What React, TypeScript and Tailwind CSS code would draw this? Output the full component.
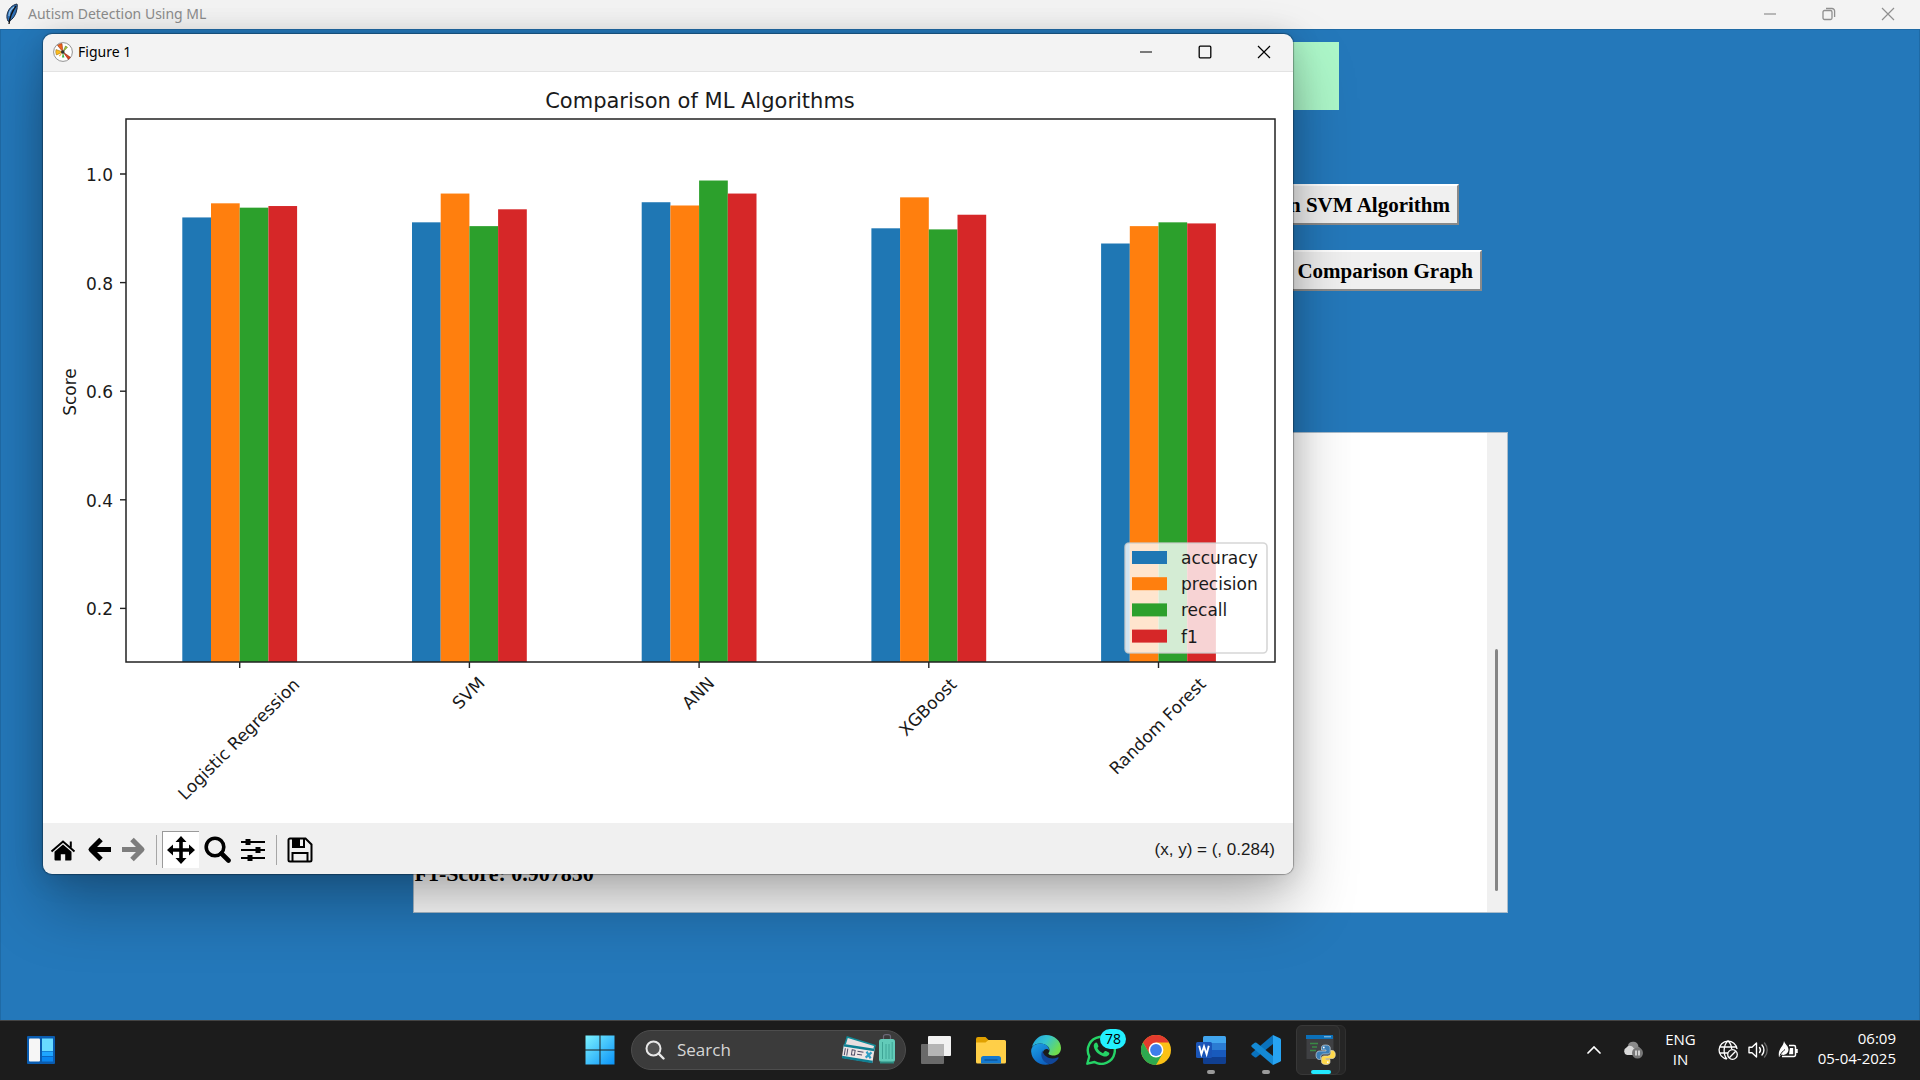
import type { ReactNode } from "react";

type Series = { name: string; color: string };
type Group = { label: string; labelY: number; scores: number[] };

const series: Series[] = [
  { name: "accuracy", color: "#1f77b4" },
  { name: "precision", color: "#ff7f0e" },
  { name: "recall", color: "#2ca02c" },
  { name: "f1", color: "#d62728" },
];

const groups: Group[] = [
  { label: "Logistic Regression", labelY: 667, scores: [0.92, 0.946, 0.938, 0.941] },
  { label: "SVM", labelY: 621, scores: [0.911, 0.964, 0.904, 0.935] },
  { label: "ANN", labelY: 621, scores: [0.948, 0.942, 0.988, 0.964] },
  { label: "XGBoost", labelY: 635, scores: [0.9, 0.957, 0.898, 0.925] },
  { label: "Random Forest", labelY: 654, scores: [0.872, 0.904, 0.911, 0.909] },
];

const yTicks = [1.0, 0.8, 0.6, 0.4, 0.2];

const plot = { left: 83, right: 1232, top: 47, bottom: 590 };
const barWidth = 28.7;
const yOf = (v: number) => 102 + (1 - v) * 543;
const centerOf = (i: number) => 196.7 + i * 229.7;

function ComparisonChart() {
  return (
    <svg
      viewBox="0 0 1250 751"
      className="block w-full bg-white"
      fontFamily="'DejaVu Sans', sans-serif"
      fontSize="17"
      fill="#1a1a1a"
      role="img"
      aria-label="Comparison of ML Algorithms"
    >
      <text x="657" y="36" textAnchor="middle" fontSize="21">
        Comparison of ML Algorithms
      </text>
      {groups.map((g, i) => (
        <g key={g.label}>
          {g.scores.map((score, j) => (
            <rect
              key={series[j].name}
              x={centerOf(i) + (j - 2) * barWidth}
              y={yOf(score)}
              width={barWidth}
              height={plot.bottom - yOf(score)}
              fill={series[j].color}
            />
          ))}
          <path d={`M${centerOf(i)} ${plot.bottom}v6`} stroke="#222" strokeWidth="1.4" />
          <text
            textAnchor="middle"
            dominantBaseline="central"
            transform={`translate(${centerOf(i) - 1} ${g.labelY}) rotate(-45)`}
          >
            {g.label}
          </text>
        </g>
      ))}
      {yTicks.map((t) => (
        <g key={t}>
          <path d={`M${plot.left} ${yOf(t)}h-6`} stroke="#222" strokeWidth="1.4" />
          <text x="70" y={yOf(t) + 7} textAnchor="end">
            {t.toFixed(1)}
          </text>
        </g>
      ))}
      <text textAnchor="middle" transform="translate(33 320) rotate(-90)">
        Score
      </text>
      <rect
        x={plot.left}
        y={plot.top}
        width={plot.right - plot.left}
        height={plot.bottom - plot.top}
        fill="none"
        stroke="#222"
        strokeWidth="1.5"
      />
      <rect x="1082" y="471" width="142" height="110" rx="4" fill="#fff" fillOpacity="0.8" stroke="#ccc" strokeOpacity="0.8" strokeWidth="1.6" />
      {series.map((s, i) => (
        <g key={s.name}>
          <rect x="1089" y={479 + i * 26.2} width="35" height="13" fill={s.color} />
          <text x="1138" y={492 + i * 26.2}>
            {s.name}
          </text>
        </g>
      ))}
    </svg>
  );
}

function WindowControls({ muted, restored }: { muted?: boolean; restored?: boolean }) {
  const item = "flex w-[59px] items-center justify-center";
  return (
    <div className={muted ? "flex self-stretch text-[#8f8f8f]" : "flex self-stretch text-black"}>
      <button className={item} aria-label="Minimize">
        <svg width="14" height="14" viewBox="0 0 14 14" stroke="currentColor" strokeWidth="1.2"><path d="M1 7h12" /></svg>
      </button>
      <button className={item} aria-label={restored ? "Restore" : "Maximize"}>
        <svg width="14" height="14" viewBox="0 0 14 14" fill="none" stroke="currentColor" strokeWidth="1.3">
          {restored ? (
            <>
              <rect x="1" y="3.5" width="9" height="9" rx="1.5" />
              <path d="M4 1.5h6a2.6 2.6 0 0 1 2.6 2.6V10" />
            </>
          ) : (
            <rect x="1.2" y="1.2" width="11.6" height="11.6" rx="1" />
          )}
        </svg>
      </button>
      <button className={item} aria-label="Close">
        <svg width="14" height="14" viewBox="0 0 14 14" stroke="currentColor" strokeWidth="1.2"><path d="M1 1l12 12M13 1L1 13" /></svg>
      </button>
    </div>
  );
}

function FeatherIcon() {
  return (
    <svg width="14" height="22" viewBox="0 0 14 22">
      <path d="M12 1C7 2 3 6 2 12c-.3 2 0 4 1 6l1 .5C8 16 11 12 12 6c.3-2 .4-4 0-5z" fill="#2e6fb5" stroke="#1b2c44" strokeWidth="1" />
      <path d="M11 3C8 7 5 12 4 21" stroke="#111" strokeWidth="1.3" fill="none" />
      <path d="M9 4C6 6 4 9 4 13" stroke="#8fc0ea" strokeWidth="1.2" fill="none" />
    </svg>
  );
}

function MatplotlibIcon() {
  return (
    <svg width="20" height="20" viewBox="0 0 20 20">
      <circle cx="10" cy="10" r="9.4" fill="#fff" stroke="#777" strokeWidth=".8" />
      <path d="M10 10L4.500 3.400A8.500 8.500 0 0 1 9 1.600z" fill="#f0641e" stroke="#7a3010" strokeWidth=".5" />
      <path d="M10 10L3 7.500a8 8 0 0 0 .4 5.500z" fill="#fdbb1c" stroke="#8a6508" strokeWidth=".5" />
      <path d="M10 10l7.400 5.200-2 2.200z" fill="#e2431e" stroke="#70200c" strokeWidth=".5" />
      <path d="M10 10l2.500-6 2 1.200z" fill="#a8cf38" stroke="#4d6613" strokeWidth=".5" />
      <path d="M10 10l-1 5.500 2.400 0z" fill="#3fb24a" />
      <path d="M10 10l-4 3.400.8 1z" fill="#f6a11e" />
      <circle cx="9.800" cy="10" r="1.800" fill="#333" />
    </svg>
  );
}

const toolIcons = {
  home: (
    <svg width="26" height="24" viewBox="0 0 26 24" fill="currentColor">
      <path d="M13 6.500l8.500 7.300v7.700a1 1 0 0 1-1 1h-5.300v-6.300h-4.400v6.300H5.500a1 1 0 0 1-1-1v-7.700z" />
      <path d="M1.500 13.500L13 3.500l11.500 10M20.800 9.500V3.500" fill="none" stroke="currentColor" strokeWidth="2" />
    </svg>
  ),
  back: (
    <svg width="25" height="25" viewBox="0 0 25 25" fill="none" stroke="currentColor" strokeWidth="5">
      <path d="M14 2.500L4 12.500l10 10M4.500 12.500h19.500" strokeLinejoin="round" />
    </svg>
  ),
  forward: (
    <svg width="25" height="25" viewBox="0 0 25 25" fill="none" stroke="currentColor" strokeWidth="5">
      <path d="M11 2.500l10 10-10 10M20.500 12.500H1" strokeLinejoin="round" />
    </svg>
  ),
  pan: (
    <svg width="28" height="28" viewBox="0 0 28 28" fill="currentColor">
      <path d="M14 0l5.500 6h-3.700v6.200H22V8.500l6 5.500-6 5.500v-3.700h-6.200V22h3.700L14 28l-5.500-6h3.700v-6.200H6v3.700L0 14l6-5.500v3.700h6.200V6H8.500z" />
    </svg>
  ),
  zoom: (
    <svg width="27" height="27" viewBox="0 0 27 27" fill="none" stroke="currentColor">
      <circle cx="11" cy="11" r="8.800" strokeWidth="3.600" />
      <path d="M17.500 17.500l7 7" strokeWidth="4.600" strokeLinecap="round" />
    </svg>
  ),
  configure: (
    <svg width="26" height="22" viewBox="0 0 26 22" fill="currentColor">
      <path d="M1 2h24v2H1zM1 10h24v2H1zM1 18h24v2H1z" />
      <path d="M5.500 0h5v6h-5zM15.500 8h5v6h-5zM7.500 16h5v6h-5z" />
    </svg>
  ),
  save: (
    <svg width="26" height="26" viewBox="0 0 26 26" fill="none" stroke="currentColor" strokeWidth="2">
      <path d="M1.500 3a1.500 1.500 0 0 1 1.500-1.500h15.500l6 6V23a1.500 1.500 0 0 1-1.500 1.500H3A1.500 1.500 0 0 1 1.500 23zM5.500 24v-8h15v8M6 2v8h11V2" />
      <path d="M6 2h6v8H6z" fill="currentColor" />
    </svg>
  ),
};

function ToolButton({ label, children, dim }: { label: string; children: ReactNode; dim?: boolean }) {
  return (
    <button aria-label={label} disabled={dim} className={dim ? "flex h-9 w-[35px] items-center justify-center pr-[2px] text-[#7d7d7d]" : "flex h-9 w-[36px] items-center justify-center text-black"}>
      {children}
    </button>
  );
}

function FigureWindow() {
  return (
    <section
      aria-label="Figure 1"
      className="absolute top-[4px] left-[42px] w-[1250px] overflow-hidden rounded-[9px] shadow-[0_0_1px_1px_rgba(0,0,0,0.3),0_32px_64px_0_rgba(0,0,0,0.28),0_2px_30px_0_rgba(0,0,0,0.16)]"
    >
      <header className="flex h-[38px] items-center border-b border-[#e3e3e3] bg-[#f3f3f3] pb-px pl-[10px]">
        <MatplotlibIcon />
        <span className="ml-[5px] flex-1 font-['Noto_Sans',sans-serif] text-[14px] leading-5 text-black">Figure 1</span>
        <WindowControls />
      </header>
      <ComparisonChart />
      <footer className="flex h-[51px] items-center bg-[#f0f0f0] pt-[2px] pr-[18px] pl-[2px]">
        <ToolButton label="Home">{toolIcons.home}</ToolButton>
        <ToolButton label="Back">{toolIcons.back}</ToolButton>
        <ToolButton label="Forward" dim>{toolIcons.forward}</ToolButton>
        <span className="mx-[4px] h-[30px] w-px bg-[#a6a6a6]" />
        <button aria-label="Pan" aria-pressed="true" className="ml-[1px] flex h-[37px] w-[37px] items-center justify-center border-t border-l border-[#9a9a9a] bg-white text-black">
          {toolIcons.pan}
        </button>
        <ToolButton label="Zoom">{toolIcons.zoom}</ToolButton>
        <ToolButton label="Configure subplots">{toolIcons.configure}</ToolButton>
        <span className="mx-[5px] h-[30px] w-px bg-[#a6a6a6]" />
        <ToolButton label="Save">{toolIcons.save}</ToolButton>
        <output className="ml-auto font-['Liberation_Sans',sans-serif] text-[17px] text-[#1a1a1a]">(x, y) = (, 0.284)</output>
      </footer>
    </section>
  );
}

function TkButton({ children }: { children: ReactNode }) {
  return (
    <button className="h-[41px] border-2 border-t-white border-r-[#8a8a8a] border-b-[#8a8a8a] border-l-white bg-[#f0f0f0] px-[7px] font-['Liberation_Serif',serif] text-[21px] leading-6 font-bold text-black">
      {children}
    </button>
  );
}

function WidgetsIcon() {
  return (
    <svg width="28" height="28" viewBox="0 0 28 28">
      <rect width="28" height="28" rx="1" fill="#0a5cb0" />
      <rect x="2" y="2.500" width="11" height="23" rx="1" fill="#f6f6f6" />
      <rect x="15" y="2.500" width="11" height="12.500" fill="#69dbff" />
      <rect x="15" y="15.500" width="11" height="4.500" fill="#1fa6ff" />
      <rect x="15" y="20.700" width="11" height="4.800" fill="#0a86f0" />
    </svg>
  );
}

function StartIcon() {
  return (
    <svg width="30" height="30" viewBox="0 0 30 30">
      <defs>
        <linearGradient id="start" x1="0" y1="0" x2="1" y2="1">
          <stop offset="0" stopColor="#7cf2ff" />
          <stop offset="1" stopColor="#0a93f8" />
        </linearGradient>
      </defs>
      <path d="M.5 .5h14v14H.5zM15.500 .5h14v14h-14zM.5 15.500h14v14H.5zM15.500 15.500h14v14h-14z" fill="url(#start)" />
    </svg>
  );
}

function TravelArt() {
  return (
    <svg width="54" height="32" viewBox="0 0 54 32">
      <g transform="rotate(17 5 4)">
        <rect x="5" y="3" width="29" height="13" fill="#e9dfe0" stroke="#0f8a96" strokeWidth="1.500" />
      </g>
      <g transform="rotate(9 2 10)">
        <rect x="2" y="10" width="31" height="14" fill="#efe6e6" />
        <path d="M2 10h31v2.500H2zM2 22h31v2.500H2z" fill="#0f7f92" />
        <path d="M4 14v7M6.500 14v7M11 14.500h3v5h-3zM16.500 15h6M16.500 18h5" stroke="#4d4b66" strokeWidth="1" fill="none" />
        <path d="M25.500 14l5 6M30.500 14l-5 6" stroke="#2f9fc4" strokeWidth="2.200" />
      </g>
      <path d="M41.500 6V2.500Q41.500 .6 44 .6h2q2.500 0 2.500 1.900V6" fill="none" stroke="#6c6878" strokeWidth="1.200" />
      <rect x="37" y="5" width="16" height="23" rx="2.500" fill="#62cbb9" />
      <path d="M40.500 8v17M44 10v15M47 10v15M50.200 8v17" stroke="#3fa496" strokeWidth="1" />
      <path d="M38 27.500h14v2H38z" fill="#2c8b80" />
    </svg>
  );
}

function TaskViewIcon() {
  return (
    <svg width="30" height="28" viewBox="0 0 30 28">
      <rect x="7" width="23" height="20" rx="1" fill="#f2f2f2" />
      <rect y="8" width="23" height="20" rx="1" fill="#6a6a6a" />
      <path d="M7 8h16v12H7z" fill="#b5b5b5" />
    </svg>
  );
}

function FolderIcon() {
  return (
    <svg width="30" height="28" viewBox="0 0 30 28">
      <path d="M0 3a2 2 0 0 1 2-2h7.500l3 3H28v8H0z" fill="#e0a000" />
      <path d="M0 6.500h9.500L12.500 4H28.500A1.500 1.500 0 0 1 30 5.500V26a1.500 1.500 0 0 1-1.500 1.500h-27A1.500 1.500 0 0 1 0 26z" fill="#ffcf48" />
      <path d="M5 27.500V22.500a2.500 2.500 0 0 1 2.500-2.500h15a2.500 2.500 0 0 1 2.500 2.500v5z" fill="#1479cf" />
      <path d="M8.500 24h13" stroke="#0b4f94" strokeWidth="1.300" />
    </svg>
  );
}

function EdgeIcon() {
  return (
    <svg width="30" height="30" viewBox="0 0 30 30">
      <defs>
        <linearGradient id="edgeTop" x1="0" y1="0" x2="1" y2=".5">
          <stop offset="0" stopColor="#1e9fe0" />
          <stop offset=".5" stopColor="#35c4d0" />
          <stop offset="1" stopColor="#6fdc4e" />
        </linearGradient>
        <linearGradient id="edgeLeft" x1="0" y1="0" x2=".6" y2="1">
          <stop offset="0" stopColor="#1da5e8" />
          <stop offset="1" stopColor="#0d62c0" />
        </linearGradient>
      </defs>
      <path d="M1 12C3 4.500 8.500 0 15 0c8.500 0 15 6 15 13 0 5-3.500 7.500-7.500 7.500-3.500 0-5.500-1.300-5-2.500 1.500-1.500 1.500-4.500-.5-6.500C13 7.500 5 7.500 1 12z" fill="url(#edgeTop)" />
      <path d="M.2 17C-.5 10.500 6 8 10.500 8.500c4.500.4 8 3.500 7.500 7-.8-2.200-5-2.200-6 1.500-1.500 5 1.500 10 6.500 12.200C8.500 31.500.800 25 .2 17z" fill="url(#edgeLeft)" />
      <path d="M11.500 15.500c-2 3-1.500 8.500 2.500 11.500 2 1.500 4 2.200 5.500 2.200 3-.7 6.500-3.200 8-6 .3-.8-.2-1.200-1-.8-6.500 3-14-.5-15-6.900z" fill="#11479a" />
    </svg>
  );
}

function WhatsAppIcon() {
  return (
    <svg width="30" height="30" viewBox="0 0 30 30" fill="none">
      <path d="M1.300 28.700l2-7.200A13.500 13.500 0 1 1 8.500 27z" stroke="#25d366" strokeWidth="2.400" strokeLinejoin="round" />
      <path d="M9 8c.8-.8 1.800-.7 2.300.3l1.100 2.600c.2.600-.3 1.200-1.100 2.100 1.300 2.600 3.200 4.200 5.700 5.200l1.700-1.900c.4-.5.8-.5 1.300-.3l2.800 1.400c.8.400.6 1.500.1 2.300-1 1.500-3 2.200-4.900 1.700C13 20.200 9 16.500 7.900 12c-.4-1.600.1-3 1.100-4z" fill="#25d366" />
    </svg>
  );
}

function ChromeIcon() {
  return (
    <svg width="30" height="30" viewBox="0 0 30 30">
      <circle cx="15" cy="15" r="15" fill="#fbc116" />
      <path d="M8.500 18.700L2 7.500A15 15 0 0 1 28 7.500H15z" fill="#e33b2e" />
      <path d="M8.500 18.700L2 7.500a15 15 0 0 0 13 22.500l6.500-11.200z" fill="#2da94f" />
      <circle cx="15" cy="15" r="7.400" fill="#fff" />
      <circle cx="15" cy="15" r="5.900" fill="#3e7eea" />
    </svg>
  );
}

function WordIcon() {
  return (
    <svg width="30" height="28" viewBox="0 0 30 28">
      <path d="M7 1.500A1.500 1.500 0 0 1 8.500 0h20A1.500 1.500 0 0 1 30 1.500V7H7z" fill="#41a5ee" />
      <path d="M7 7h23v7H7z" fill="#2b7cd3" />
      <path d="M7 14h23v7H7z" fill="#185abd" />
      <path d="M7 21h23v5.500a1.500 1.500 0 0 1-1.500 1.500h-20A1.500 1.500 0 0 1 7 26.500z" fill="#103f91" />
      <rect y="6" width="16" height="16" rx="1.500" fill="#1a55b8" />
      <path d="M3.200 9.800l2.200 8.400L8 10.500l2.600 7.700 2.200-8.400" fill="none" stroke="#fff" strokeWidth="1.900" />
    </svg>
  );
}

function VSCodeIcon() {
  return (
    <svg width="30" height="30" viewBox="0 0 30 30">
      <path d="M22 0v9L5.500 22.200a1.500 1.500 0 0 1-1.800 0L.8 20a1.300 1.300 0 0 1 0-1.900z" fill="#0a72bd" />
      <path d="M22 30v-9L5.500 7.800a1.500 1.500 0 0 0-1.800 0L.8 10a1.300 1.300 0 0 0 0 1.900z" fill="#1489d4" />
      <path d="M22 0l7 3.200q1 .5 1 1.600v20.400q0 1.100-1 1.600L22 30z" fill="#27a3f2" />
    </svg>
  );
}

function PythonConsoleIcon() {
  return (
    <svg width="30" height="30" viewBox="0 0 30 30">
      <rect x=".5" y="1" width="27" height="23" fill="#3f4043" />
      <path d="M0 0h27v4H0z" fill="#0b6fb8" />
      <path d="M18 1.800h7" stroke="#9cc9e8" strokeWidth="1" />
      <path d="M4 8.500h8M6 12h5M4 15.500h6" stroke="#3a8a45" strokeWidth="1.300" />
      <path d="M19.500 10c-3.300 0-4 1.300-4 2.800V15h4.500v1h-6.500c-2.300 0-3.500 1.700-3.500 4.200 0 2.400 1.200 4.300 3.200 4.300h1.500V22c0-1.700 1.300-3 3-3h4c1.400 0 2.500-1 2.500-2.500v-3.700c0-1.800-1.700-2.800-4.700-2.800z" fill="#3b7db5" stroke="#dfe6ea" strokeWidth=".6" />
      <path d="M20 29.500c3.300 0 4-1.200 4-2.700v-2.200h-4.300v-1H26c2.300 0 3.300-1.600 3.300-3.900 0-2.300-1-4.200-3-4.200h-1.500v2.300c0 1.800-1.300 3.100-3 3.100H18c-1.400 0-2.500 1-2.500 2.400v3.500c0 1.800 1.500 2.700 4.500 2.700z" fill="#ffd84a" stroke="#efe9cf" strokeWidth=".6" />
      <circle cx="17.800" cy="12.500" r=".9" fill="#fff" />
      <circle cx="21.800" cy="27.200" r=".9" fill="#fff" />
    </svg>
  );
}

function TaskItem({ label, children, running }: { label: string; children: ReactNode; running?: boolean }) {
  return (
    <button aria-label={label} className="relative flex h-[58px] w-[55px] items-center justify-center">
      {children}
      {running && <span className="absolute bottom-[5px] h-1 w-2 rounded-full bg-[#9a9a9a]" />}
    </button>
  );
}

function Taskbar() {
  return (
    <footer className="grid h-[60px] shrink-0 grid-cols-[1fr_auto_1fr] items-center border-t border-[#444] bg-[#1c1c1c] pb-px text-white">
      <button aria-label="Widgets" className="ml-[27px] w-7">
        <WidgetsIcon />
      </button>
      <nav aria-label="Taskbar" className="flex items-center">
        <TaskItem label="Start"><StartIcon /></TaskItem>
        <label className="mr-[2px] ml-1 flex h-10 w-[275px] items-center rounded-full border border-[#4d4d4d] bg-[#3b3b3b] pr-[9px] pl-[13px]">
          <svg width="20" height="20" viewBox="0 0 20 20" fill="none" stroke="#e8e8e8" strokeWidth="2" strokeLinecap="round">
            <circle cx="8.500" cy="8.500" r="7" fill="#525252" />
            <path d="M13.700 13.700l4.800 4.800" strokeWidth="2.400" />
          </svg>
          <input type="text" placeholder="Search" aria-label="Search" className="ml-3 w-0 min-w-0 flex-1 bg-transparent text-[17px] outline-none placeholder:text-[#d6d6d6]" />
          <TravelArt />
        </label>
        <TaskItem label="Task view"><TaskViewIcon /></TaskItem>
        <TaskItem label="File Explorer"><FolderIcon /></TaskItem>
        <TaskItem label="Edge"><EdgeIcon /></TaskItem>
        <TaskItem label="WhatsApp">
          <WhatsAppIcon />
          <span className="absolute top-[8px] right-[2px] flex h-5 w-[26px] items-center justify-center rounded-full bg-[#23f0ff] text-[14px] leading-5 text-black">78</span>
        </TaskItem>
        <TaskItem label="Chrome"><ChromeIcon /></TaskItem>
        <TaskItem label="Word" running><WordIcon /></TaskItem>
        <TaskItem label="Visual Studio Code" running><VSCodeIcon /></TaskItem>
        <button aria-label="Python" className="relative flex h-[58px] w-[55px] items-center pl-[3px]">
          <span className="absolute top-[4px] left-[10px] h-[50px] w-[43px] rounded-md border border-[#303030] bg-[#252525]" />
          <span className="relative flex h-[50px] w-[44px] items-center justify-center rounded-md border border-[#383838] bg-[#2b2b2b]">
            <span className="pl-[6px]"><PythonConsoleIcon /></span>
          </span>
          <span className="absolute bottom-[5px] left-[18px] h-1 w-5 rounded-full bg-[#23e9ff]" />
        </button>
      </nav>
      <div className="flex items-center justify-end gap-[22px] pr-6 text-[15px] leading-5">
        <button aria-label="Show hidden icons">
          <svg width="14" height="8" viewBox="0 0 14 8" fill="none" stroke="#fff" strokeWidth="1.700" strokeLinecap="round"><path d="M1 7l6-6 6 6" /></svg>
        </button>
        <svg width="20" height="18" viewBox="0 0 20 18">
          <path d="M5 4a5.500 5.500 0 0 1 10.500 2c2 .5 2.500 2 2.500 3.500L9 12z" fill="#8a8a8a" />
          <path d="M4 14a4 4 0 0 1-.5-7.500C5 4 9 4 10.500 7L14 9v5z" fill="#d8d8d8" />
          <circle cx="14.500" cy="12" r="5.500" fill="#777" />
          <path d="M13 9.500v5M16 9.500v5" stroke="#fff" strokeWidth="1.300" />
        </svg>
        <button className="pb-[2px] text-center">
          ENG
          <br />
          IN
        </button>
        <button aria-label="Network, volume and battery" className="flex items-center gap-[10px]">
          <svg width="20" height="20" viewBox="0 0 20 20" fill="none" stroke="#fff" strokeWidth="1.300">
            <path d="M19 9A9 9 0 1 0 9 19M1.500 7h17M1.500 13H10M10 1C5 5 5 15 9 19M10 1c2.500 2 3.500 5 3.700 8" />
            <circle cx="14.500" cy="14.500" r="4.800" fill="#1c1c1c" />
            <path d="M11.300 17.700l6.400-6.400" />
          </svg>
          <svg width="20" height="18" viewBox="0 0 20 18" fill="none" stroke="#fff" strokeWidth="1.400" strokeLinecap="round" strokeLinejoin="round">
            <path d="M1 6.200h3L8.500 2v14L4 11.800H1zM11.500 6.500a4 4 0 0 1 0 5M14 4a7.500 7.500 0 0 1 0 10" />
            <path d="M16.500 2a10.500 10.500 0 0 1 0 14" stroke="#666" />
          </svg>
          <svg width="20" height="18" viewBox="0 0 20 18" fill="none" stroke="#fff" strokeWidth="1.500">
            <path d="M11 4.500h5A1.500 1.500 0 0 1 17.500 6v8a1.500 1.500 0 0 1-1.500 1.500H4M19 8v4" />
            <path d="M11 13.200h4.200V7H12z" fill="#fff" stroke="none" />
            <path d="M6 0C7 3.500 10.500 4.500 10.500 9a5 5 0 0 1-7 4.500L1 16C-.5 7.500 5.500 6 6 0z" fill="#fff" stroke="none" />
            <path d="M2 14.500c1.500-3 3-4.500 5-6" stroke="#1c1c1c" strokeWidth="1" />
          </svg>
        </button>
        <time className="-ml-[2px] pb-1 text-right" dateTime="2025-04-05T06:09">
          06:09
          <br />
          05-04-2025
        </time>
      </div>
    </footer>
  );
}

export default function App() {
  return (
    <div className="flex h-screen flex-col overflow-hidden bg-[#2478ba] font-['Open_Sans','Noto_Sans',sans-serif]">
      <header className="flex h-[29px] shrink-0 items-center bg-[#f3f3f3] pr-[3px] pb-px pl-[5px]">
        <FeatherIcon />
        <h1 className="ml-[9px] flex-1 font-['Noto_Sans',sans-serif] text-[14px] leading-5 text-[#8c8c8c]">Autism Detection Using ML</h1>
        <WindowControls muted restored />
      </header>

      <main className="relative flex min-h-0 flex-1 flex-col border-x border-t border-[#1f6aa5]">
        <div className="mx-auto mt-[12px] h-[68px] w-[757px] shrink-0 bg-[#adf7c9]" />
        <div className="mt-[74px] flex justify-end pr-[460px]">
          <TkButton>Run SVM Algorithm</TkButton>
        </div>
        <div className="mt-[25px] flex justify-end pr-[437px]">
          <TkButton>Comparison Graph</TkButton>
        </div>
        <div className="mx-auto mt-[141px] flex h-[481px] w-[1095px] shrink-0 border border-[#a9bccb] bg-white">
          <textarea
            readOnly
            aria-label="Results"
            defaultValue="F1-Score: 0.907850"
            className="flex-1 resize-none overflow-hidden bg-white pt-[429px] pl-[1px] font-['Liberation_Serif',serif] text-[22px] leading-6 font-bold text-black outline-none"
          />
          <div className="flex w-5 justify-center bg-[#f0f0f0] pt-[216px]">
            <div className="h-[242px] w-[3px] rounded-full bg-[#858585]" />
          </div>
        </div>
        <FigureWindow />
      </main>

      <Taskbar />
    </div>
  );
}
